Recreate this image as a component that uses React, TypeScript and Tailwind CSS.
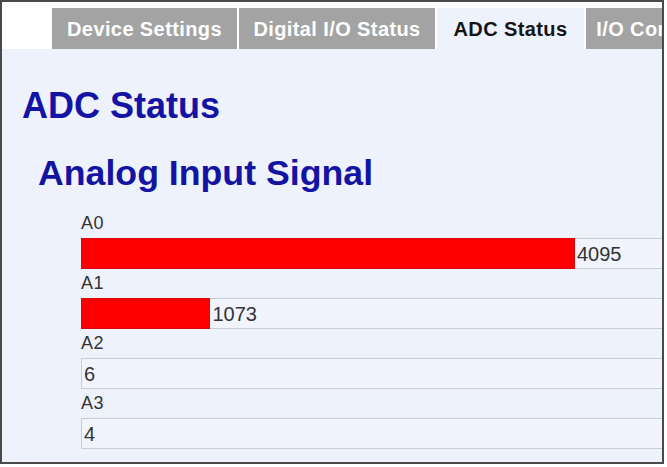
import React from 'react';

const tabs = [
  { label: 'Device Settings', w: 'w-[185px]', active: false },
  { label: 'Digital I/O Status', w: 'w-[196px]', active: false },
  { label: 'ADC Status', w: 'w-[147px]', active: true },
  { label: 'I/O Config', w: 'w-[120px]', active: false },
];

const channels = [
  { name: 'A0', value: 4095 },
  { name: 'A1', value: 1073 },
  { name: 'A2', value: 6 },
  { name: 'A3', value: 4 },
];

const BAR_MAX = 494;

export default function App() {
  return (
    <div className="min-h-screen bg-white font-['Liberation_Sans',Arial,sans-serif]">
      <div className="w-[664px] h-[464px] border-2 border-[#4a4a4a] bg-white overflow-hidden flex flex-col">
        {/* tab strip */}
        <div className="flex gap-[2px] pl-[50px] pt-[6px] bg-white shrink-0">
          {tabs.map((t) => (
            <div
              key={t.label}
              className={`${t.w} shrink-0 h-[41px] flex items-center justify-center px-[15px] whitespace-nowrap overflow-hidden text-[20px] tracking-[0.4px] font-bold ${
                t.active ? 'bg-[#eef2fc] text-[#151515]' : 'bg-[#a3a3a3] text-white'
              }`}
            >
              {t.label}
            </div>
          ))}
        </div>

        {/* content */}
        <div className="flex-1 bg-[#eef2fc] pl-[20px] overflow-hidden">
          <h1 className="mt-[39px] text-[36px] leading-[36px] font-bold text-[#1414a4]">ADC Status</h1>
          <h2 className="mt-[31px] ml-[16px] text-[35.7px] leading-[36px] font-bold text-[#1414a4]">Analog Input Signal</h2>

          <div className="mt-[18px] ml-[59px] w-[700px]">
            {channels.map((c) => {
              const w = (c.value / 4095) * BAR_MAX;
              return (
                <div key={c.name}>
                  <div className="h-[29px] leading-[29px] text-[18px] text-[#333] tracking-[0.5px]">{c.name}</div>
                  <div className="h-[31px] flex items-stretch border border-[#c9cdd6] bg-[#f1f4fc]">
                    {w >= 1.5 ? (
                      <div className="bg-[#ff0000] border border-[#d40a0a] -my-px -ml-px" style={{ width: w }} />
                    ) : null}
                    <span className="self-center ml-[2px] text-[20px] text-[#333]">{c.value}</span>
                  </div>
                </div>
              );
            })}
          </div>
        </div>
      </div>
    </div>
  );
}
